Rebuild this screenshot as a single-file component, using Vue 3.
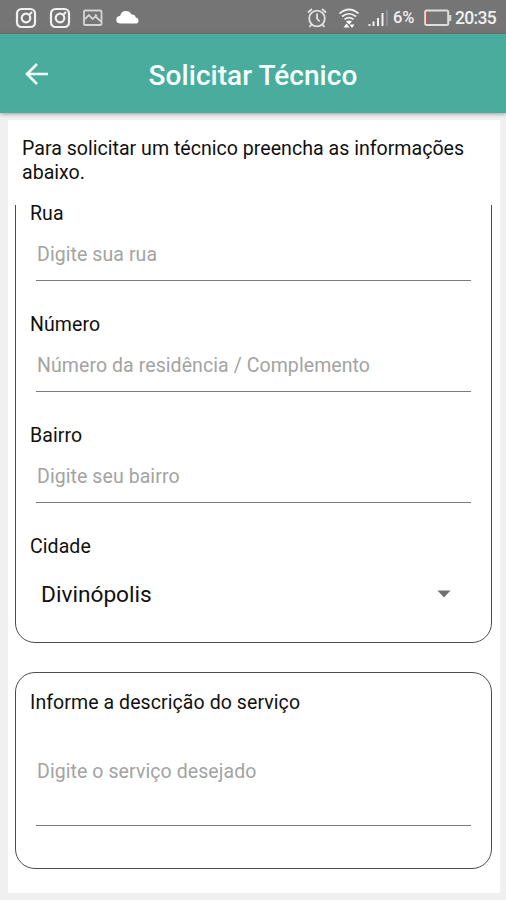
<template>
  <div class="screen">
    <div class="status-bar">
      <svg v-for="n in 2" :key="n" class="instagram" width="22" height="22" viewBox="0 0 22 22">
        <rect x="2" y="2" width="18" height="18" rx="4.5"/>
        <circle cx="11" cy="11" r="4.3"/>
        <path d="M14.500 7.500l2.500-2.500"/>
      </svg>
      <svg class="picture" width="20" height="18" viewBox="0 0 20 18">
        <rect x="1" y="1.500" width="17.500" height="14.500" rx="1"/>
        <path d="M2 10l4-4 3.500 4 3-2.500L18 12.500M12 5.500l2 2"/>
      </svg>
      <svg class="cloud" width="24" height="16" viewBox="0 0 24 16">
        <path d="M4 14.500a3.800 3.800 0 0 1 .2-7.600Q5 2 10 2q4 0 5.500 3.500 3.500-.3 4.300 3Q22.500 9 22.500 11.700q0 2.800-3 2.800z"/>
      </svg>

      <div class="status-right">
        <svg class="alarm" width="22" height="22" viewBox="0 0 22 22">
          <circle cx="11" cy="11.500" r="7.800"/>
          <path d="M11 6.500v5l2.500 3M2 5.500L6 2M20 5.500L16 2M5.500 17.500L3.500 20M16.500 17.500l2 2.500"/>
        </svg>
        <svg class="wifi" width="22" height="22" viewBox="0 0 22 22">
          <path d="M1.500 6.500Q11-1.500 20.500 6.500M4 9.500q7-5.500 14 0M6.500 12.300q4.500-3.500 9 0"/>
          <path class="solid" d="M8 14.500q3-2 6 0l-3 3zM5.500 20.500l3-4 3 4zM11.500 17.500h5L14 21z"/>
        </svg>
        <svg class="signal" width="21" height="20" viewBox="0 0 21 20">
          <path d="M1.500 18v-2M5.500 18v-4.500M10 18v-8M14.500 18V5"/>
          <path class="faint" d="M19 18V2"/>
        </svg>
        <span class="percent">6%</span>
        <svg class="battery" width="28" height="18" viewBox="0 0 28 18">
          <rect x="1.200" y="1.500" width="23" height="14.500" rx="1.500"/>
          <path d="M26.200 6v6"/>
          <path class="low" d="M3 3v11.500"/>
        </svg>
        <span class="clock">20:35</span>
      </div>
    </div>

    <header class="toolbar">
      <button class="back" aria-label="Voltar">
        <svg width="24" height="24" viewBox="0 0 24 24">
          <path d="M23 12H2M12 2L2 12l10 10"/>
        </svg>
      </button>
      <h1>Solicitar Técnico</h1>
    </header>

    <main class="card">
      <p class="intro">Para solicitar um técnico preencha as informações abaixo.</p>

      <div class="scroll">
        <section class="box address">
          <div v-for="field in fields" :key="field.id" class="field">
            <label :for="field.id">{{ field.label }}</label>
            <input :id="field.id" v-model="form[field.id]" type="text" :placeholder="field.placeholder">
          </div>
          <div class="city">
            <span class="label">Cidade</span>
            <button class="select">
              <span>{{ form.cidade }}</span>
              <svg width="14" height="8" viewBox="0 0 14 8"><path d="M.5.500h13L7 7.500z"/></svg>
            </button>
          </div>
        </section>

        <section class="box service">
          <label for="servico">Informe a descrição do serviço</label>
          <input id="servico" v-model="form.servico" type="text" placeholder="Digite o serviço desejado">
        </section>
      </div>
    </main>
  </div>
</template>

<script setup>

import {reactive} from "vue";

const fields = [
  {id: "rua", label: "Rua", placeholder: "Digite sua rua"},
  {id: "numero", label: "Número", placeholder: "Número da residência / Complemento"},
  {id: "bairro", label: "Bairro", placeholder: "Digite seu bairro"}
]

const form = reactive({
  rua: "",
  numero: "",
  bairro: "",
  cidade: "Divinópolis",
  servico: ""
})

</script>

<style>
body {
  background: #f0f0f0;
}
</style>

<style scoped>
.screen {
  display: flex;
  flex-direction: column;
  box-sizing: border-box;
  height: 900px;
  overflow: hidden;
  background: #f0f0f1;
  color: #111;
  font-family: Roboto, sans-serif;
}

button {
  padding: 0;
  border: none;
  background: none;
  font: inherit;
  color: inherit;
}

svg {
  display: block;
  flex: none;
  fill: none;
  stroke: #f0f0f0;
  stroke-width: 1.8;
}

.status-bar {
  display: flex;
  align-items: center;
  flex: none;
  box-sizing: border-box;
  height: 34px;
  padding: 1px 10px 0 15px;
  background: #757575;
  color: #f0f0f0;
}

.instagram {
  margin-right: 12px;
  stroke-width: 2.2;
}

.picture {
  margin-right: 13px;
  stroke: #d4d4d4;
  stroke-width: 1.8;
}

.cloud {
  margin-top: -2px;
  fill: #fff;
  stroke: none;
}

.status-right {
  display: flex;
  align-items: center;
  margin-left: auto;
}

.alarm {
  margin-right: 10px;
  stroke: #e2e2e2;
}

.wifi {
  margin-right: 8px;
  stroke-width: 1.7;
}

.wifi .solid {
  fill: #fff;
  stroke: none;
}

.signal {
  margin-right: 4px;
  stroke-width: 2;
}

.signal .faint {
  stroke: #8d8d8d;
}

.percent {
  width: 23px;
  margin-right: 8px;
  font-size: 16.5px;
  font-weight: 500;
  letter-spacing: -0.2px;
}

.battery {
  margin-right: 3px;
  stroke: #dedede;
  stroke-width: 2;
}

.battery .low {
  stroke: #c84b4b;
  stroke-width: 1.5;
}

.clock {
  font-size: 17.5px;
  font-weight: 500;
  letter-spacing: -0.7px;
}

.toolbar {
  display: grid;
  grid-template-columns: 74px 1fr 74px;
  align-items: center;
  flex: none;
  height: 79px;
  background: #4aac9d;
  box-shadow: 0 1px 4px rgba(0, 0, 0, 0.35);
  color: #f4fffd;
}

.back {
  justify-self: center;
}

.back svg {
  stroke: #f4fffd;
  stroke-width: 2.6;
}

h1 {
  margin: 4px 0 0;
  font-size: 28px;
  font-weight: 500;
  letter-spacing: 0.04px;
  line-height: 32px;
  text-align: center;
}

.card {
  display: flex;
  flex-direction: column;
  flex: 1;
  min-height: 0;
  margin: 7px 6px 7px 8px;
  background: #fff;
}

.intro {
  flex: none;
  height: 48px;
  margin: 0;
  padding: 17px 14px 20px;
  font-size: 19.6px;
  line-height: 23.5px;
}

.scroll {
  flex: 1;
  min-height: 0;
  padding: 0 8px 0 7px;
  overflow: hidden;
}

.box {
  box-sizing: border-box;
  border: 1px solid #4c4c4c;
  border-radius: 20px;
  padding: 0 20px 0 14px;
}

/* scrolled up, so the top edge is hidden under the intro text */
.address {
  height: 462px;
  margin-top: -24px;
  padding-top: 23px;
}

.service {
  height: 197px;
  margin-top: 29px;
  padding-top: 21px;
}

label,
.label {
  display: block;
  margin-bottom: 3px;
  font-size: 19.5px;
  letter-spacing: 0.08px;
  line-height: 18px;
}

input {
  display: block;
  box-sizing: border-box;
  width: calc(100% - 6px);
  height: 55px;
  margin: 0 0 0 6px;
  padding: 3px 0 0 1px;
  border: none;
  border-bottom: 1px solid #7c7c7c;
  border-radius: 0;
  outline: none;
  background: none;
  font: 19.5px Roboto, sans-serif;
  letter-spacing: 0.08px;
}

.field input {
  margin-bottom: 35px;
}

input::placeholder {
  color: #a3a3a3;
}

.service input {
  height: 111px;
  padding-top: 2px;
}

.select {
  display: flex;
  align-items: center;
  justify-content: space-between;
  width: 100%;
  height: 70px;
  padding: 0 20px 0 11px;
  font-size: 22.7px;
}

.select svg {
  fill: #707070;
  stroke: none;
}
</style>
